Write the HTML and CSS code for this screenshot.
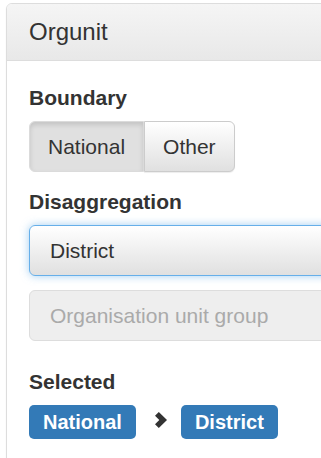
FILE: index.html
```html
<!DOCTYPE html>
<html lang="en">
<head>
    <meta charset="UTF-8">
    <meta name="viewport" content="width=device-width, initial-scale=1.0">
    <title>Orgunit</title>
    <link rel="stylesheet" href="styles.css">
</head>
<body>

<div class="panel">
    <div class="panel-heading">Orgunit</div>

    <div class="panel-body">
        <div class="form-group">
            <label class="field-label">Boundary</label>
            <div class="btn-group">
                <button class="btn active">National</button>
                <button class="btn">Other</button>
            </div>
        </div>

        <div class="form-group">
            <label class="field-label">Disaggregation</label>
            <div class="select focused">District</div>
            <div class="select disabled">Organisation unit group</div>
        </div>

        <div class="selected">
            <label class="field-label">Selected</label>
            <div class="crumbs">
                <span class="badge">National</span>
                <svg class="chevron" width="13" height="16" viewBox="0 0 13 16">
                    <polygon points="0,3.8 3.8,0 12,8 3.8,16 0,12.2 4.3,8" fill="#333"/>
                </svg>
                <span class="badge">District</span>
            </div>
        </div>
    </div>
</div>

</body>
</html>
```

FILE: styles.css
```css
body {
    font-family: 'Liberation Sans', Arial, sans-serif;
    font-size: 21px;
    color: #333333;
    background-color: #ffffff;
    margin: 0;
    overflow: hidden;
}
.panel {
    margin: 3px 0 0 6px;
    width: 420px;
    border: 1px solid #dddddd;
    border-radius: 6px;
    box-shadow: 0 1px 2px rgba(0, 0, 0, 0.05);
    min-height: 470px;
}
.panel-heading {
    padding: 15px 22px;
    font-size: 24px;
    line-height: 26px;
    border-bottom: 1px solid #dddddd;
    border-radius: 5px 5px 0 0;
    background-image: linear-gradient(to bottom, #f5f5f5 0%, #e8e8e8 100%);
}
.panel-body {
    padding: 22px 22px;
}
.field-label {
    display: block;
    font-weight: bold;
    line-height: 30px;
    margin-bottom: 8px;
}
.form-group {
    margin-bottom: 15px;
}
.btn-group {
    display: flex;
}
.btn {
    font-family: inherit;
    font-size: 21px;
    line-height: 31px;
    padding: 9px 18px;
    color: #333333;
    border: 1px solid #cccccc;
    background-image: linear-gradient(to bottom, #ffffff 0%, #e0e0e0 100%);
    box-shadow: inset 0 1px 0 rgba(255, 255, 255, 0.15), 0 1px 1px rgba(0, 0, 0, 0.075);
    border-radius: 0 6px 6px 0;
    margin: 0;
}
.btn.active {
    background-image: none;
    background-color: #e0e0e0;
    border-color: #dbdbdb;
    border-radius: 6px 0 0 6px;
    box-shadow: inset 0 3px 5px rgba(0, 0, 0, 0.125);
}
.select {
    line-height: 31px;
    padding: 9px 20px;
    border: 1px solid #cccccc;
    border-radius: 6px;
}
.select.focused {
    border-color: #66afe9;
    background-image: linear-gradient(to bottom, #ffffff 0%, #e0e0e0 100%);
    box-shadow: 0 0 8px rgba(102, 175, 233, 0.6);
}
.select.disabled {
    margin-top: 14px;
    color: #aaaaaa;
    background-color: #eeeeee;
    border-color: #dddddd;
}
.selected {
    margin-top: 26px;
}
.crumbs {
    display: flex;
    align-items: flex-start;
}
.badge {
    display: inline-block;
    font-size: 20px;
    font-weight: bold;
    line-height: 34px;
    padding: 0 14px;
    color: #ffffff;
    background-color: #337ab7;
    border-radius: 5px;
}
.chevron {
    margin: 7px 13px 0 19px;
}
```
